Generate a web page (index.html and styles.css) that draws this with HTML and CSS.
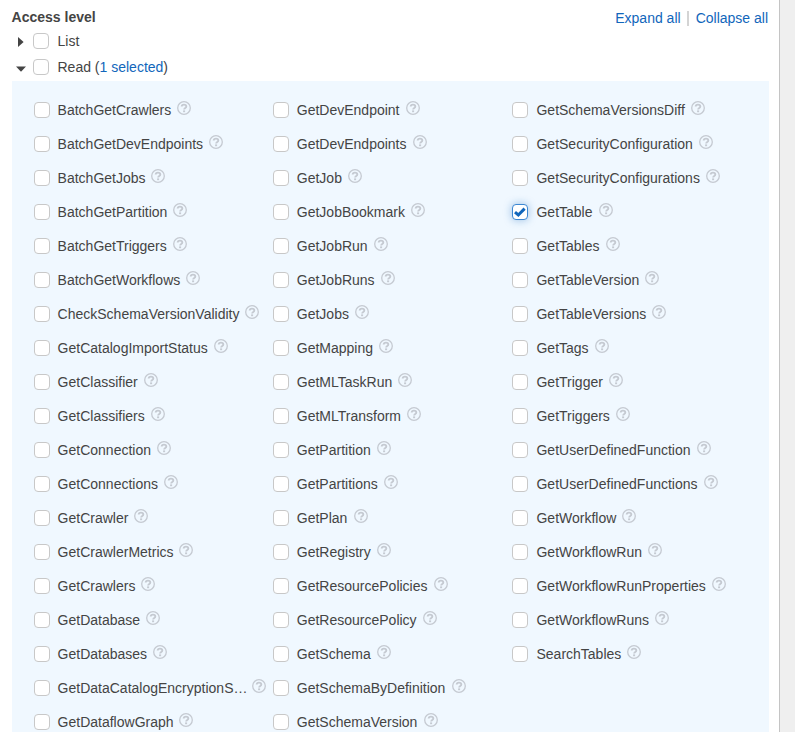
FILE: index.html
```html
<!DOCTYPE html>
<html lang="en">
<head>
<meta charset="utf-8">
<title>Access level</title>
<link rel="stylesheet" href="styles.css">
</head>
<body>
<svg class="defs" aria-hidden="true">
<symbol id="q" viewBox="0 0 14 14"><circle cx="7" cy="7" r="6.3" fill="none" stroke="currentColor" stroke-width="1.3"/><path d="M4.7 5.6C4.7 3 9.3 3 9.3 5.5C9.3 7 7.1 6.9 7.1 8.6" fill="none" stroke="currentColor" stroke-width="1.9"/><rect x="6.1" y="9.4" width="2" height="1.8" fill="currentColor"/></symbol>
</svg>
<div class="page">
<main class="content">
<header class="head">
<h1>Access level</h1>
<nav><a>Expand all</a><i class="sep"></i><a>Collapse all</a></nav>
</header>
<div class="group"><svg class="caret" viewBox="0 0 12 12"><path d="M3 1L8.6 6L3 11Z"/></svg><input type="checkbox"><span>List</span></div>
<div class="group"><svg class="caret" viewBox="0 0 12 12"><path d="M1 4.6H11L6 9.8Z"/></svg><input type="checkbox"><span>Read (<a>1 selected</a>)</span></div>
<section class="panel">
<div class="col">
<label><input type="checkbox"><span>BatchGetCrawlers</span><svg><use href="#q"/></svg></label>
<label><input type="checkbox"><span>BatchGetDevEndpoints</span><svg><use href="#q"/></svg></label>
<label><input type="checkbox"><span>BatchGetJobs</span><svg><use href="#q"/></svg></label>
<label><input type="checkbox"><span>BatchGetPartition</span><svg><use href="#q"/></svg></label>
<label><input type="checkbox"><span>BatchGetTriggers</span><svg><use href="#q"/></svg></label>
<label><input type="checkbox"><span>BatchGetWorkflows</span><svg><use href="#q"/></svg></label>
<label><input type="checkbox"><span>CheckSchemaVersionValidity</span><svg><use href="#q"/></svg></label>
<label><input type="checkbox"><span>GetCatalogImportStatus</span><svg><use href="#q"/></svg></label>
<label><input type="checkbox"><span>GetClassifier</span><svg><use href="#q"/></svg></label>
<label><input type="checkbox"><span>GetClassifiers</span><svg><use href="#q"/></svg></label>
<label><input type="checkbox"><span>GetConnection</span><svg><use href="#q"/></svg></label>
<label><input type="checkbox"><span>GetConnections</span><svg><use href="#q"/></svg></label>
<label><input type="checkbox"><span>GetCrawler</span><svg><use href="#q"/></svg></label>
<label><input type="checkbox"><span>GetCrawlerMetrics</span><svg><use href="#q"/></svg></label>
<label><input type="checkbox"><span>GetCrawlers</span><svg><use href="#q"/></svg></label>
<label><input type="checkbox"><span>GetDatabase</span><svg><use href="#q"/></svg></label>
<label><input type="checkbox"><span>GetDatabases</span><svg><use href="#q"/></svg></label>
<label><input type="checkbox"><span class="clipped">GetDataCatalogEncryptionS…</span><svg><use href="#q"/></svg></label>
<label><input type="checkbox"><span>GetDataflowGraph</span><svg><use href="#q"/></svg></label>
</div>
<div class="col">
<label><input type="checkbox"><span>GetDevEndpoint</span><svg><use href="#q"/></svg></label>
<label><input type="checkbox"><span>GetDevEndpoints</span><svg><use href="#q"/></svg></label>
<label><input type="checkbox"><span>GetJob</span><svg><use href="#q"/></svg></label>
<label><input type="checkbox"><span>GetJobBookmark</span><svg><use href="#q"/></svg></label>
<label><input type="checkbox"><span>GetJobRun</span><svg><use href="#q"/></svg></label>
<label><input type="checkbox"><span>GetJobRuns</span><svg><use href="#q"/></svg></label>
<label><input type="checkbox"><span>GetJobs</span><svg><use href="#q"/></svg></label>
<label><input type="checkbox"><span>GetMapping</span><svg><use href="#q"/></svg></label>
<label><input type="checkbox"><span>GetMLTaskRun</span><svg><use href="#q"/></svg></label>
<label><input type="checkbox"><span>GetMLTransform</span><svg><use href="#q"/></svg></label>
<label><input type="checkbox"><span>GetPartition</span><svg><use href="#q"/></svg></label>
<label><input type="checkbox"><span>GetPartitions</span><svg><use href="#q"/></svg></label>
<label><input type="checkbox"><span>GetPlan</span><svg><use href="#q"/></svg></label>
<label><input type="checkbox"><span>GetRegistry</span><svg><use href="#q"/></svg></label>
<label><input type="checkbox"><span>GetResourcePolicies</span><svg><use href="#q"/></svg></label>
<label><input type="checkbox"><span>GetResourcePolicy</span><svg><use href="#q"/></svg></label>
<label><input type="checkbox"><span>GetSchema</span><svg><use href="#q"/></svg></label>
<label><input type="checkbox"><span>GetSchemaByDefinition</span><svg><use href="#q"/></svg></label>
<label><input type="checkbox"><span>GetSchemaVersion</span><svg><use href="#q"/></svg></label>
</div>
<div class="col">
<label><input type="checkbox"><span>GetSchemaVersionsDiff</span><svg><use href="#q"/></svg></label>
<label><input type="checkbox"><span>GetSecurityConfiguration</span><svg><use href="#q"/></svg></label>
<label><input type="checkbox"><span>GetSecurityConfigurations</span><svg><use href="#q"/></svg></label>
<label><span class="checked"><input type="checkbox" checked><svg class="tick" viewBox="0 0 16 16"><path d="M3 8.2L6.3 11L12.6 4.6"/></svg></span><span>GetTable</span><svg><use href="#q"/></svg></label>
<label><input type="checkbox"><span>GetTables</span><svg><use href="#q"/></svg></label>
<label><input type="checkbox"><span>GetTableVersion</span><svg><use href="#q"/></svg></label>
<label><input type="checkbox"><span>GetTableVersions</span><svg><use href="#q"/></svg></label>
<label><input type="checkbox"><span>GetTags</span><svg><use href="#q"/></svg></label>
<label><input type="checkbox"><span>GetTrigger</span><svg><use href="#q"/></svg></label>
<label><input type="checkbox"><span>GetTriggers</span><svg><use href="#q"/></svg></label>
<label><input type="checkbox"><span>GetUserDefinedFunction</span><svg><use href="#q"/></svg></label>
<label><input type="checkbox"><span>GetUserDefinedFunctions</span><svg><use href="#q"/></svg></label>
<label><input type="checkbox"><span>GetWorkflow</span><svg><use href="#q"/></svg></label>
<label><input type="checkbox"><span>GetWorkflowRun</span><svg><use href="#q"/></svg></label>
<label><input type="checkbox"><span>GetWorkflowRunProperties</span><svg><use href="#q"/></svg></label>
<label><input type="checkbox"><span>GetWorkflowRuns</span><svg><use href="#q"/></svg></label>
<label><input type="checkbox"><span>SearchTables</span><svg><use href="#q"/></svg></label>
</div>
</section>
</main>
<aside class="gutter"></aside>
</div>
</body>
</html>
```
FILE: styles.css
```css
* { box-sizing: border-box; }
body {
  margin: 0;
  background: #fff;
  color: #444;
  font: 14px/20px "Liberation Sans", Arial, sans-serif;
  overflow: hidden;
}
.defs { display: none; }
.page { display: flex; height: 732px; overflow: hidden; }
.content { width: 779px; flex: none; padding: 7px 10px 0 12px; }
.gutter { width: 16px; background: #efefef; border-left: 1px solid #c4c4c4; }
a { color: #1166bb; }
.head { display: flex; justify-content: space-between; height: 21px; }
.head h1 { margin: 0 0 0 -0.4px; font-size: 14px; line-height: 20px; }
.head nav { display: flex; align-items: center; height: 22px; padding-right: 1px; }
.sep { width: 2px; height: 15px; margin: 0 6.6px 0 6.4px; background: #d4d4d4; }
.group { display: flex; align-items: center; height: 26px; }
.caret { width: 12px; height: 12px; margin: 2px 6px 0 3px; fill: #444; }
.group input { margin: 0 8.5px 0 0; }
input {
  appearance: none;
  flex: none;
  width: 16px;
  height: 16px;
  margin: 0;
  border: 1px solid #c8c8c8;
  border-radius: 4px;
  background: #fff;
}
.panel {
  display: flex;
  height: 700px;
  margin-top: 1px;
  padding: 12px 0 0 22px;
  background: #f0f8ff;
}
.col { width: 239.2px; flex: none; }
.col:last-child { width: 235px; }
label { display: flex; align-items: center; height: 34px; white-space: nowrap; }
label > span { margin-left: 7.6px; }
.col:last-child label > span { margin-left: 8.1px; }
label > svg { width: 14px; height: 14px; margin: 0 0 4px 5.85px; color: #c5cad2; }
.col + .col label > svg { margin-left: 6.15px; }
label > .clipped { margin-right: -1px; }
.col:last-child label > .checked { display: grid; margin: 0; }
.checked > * { grid-area: 1 / 1; }
.checked input { border-color: #3c87d2; box-shadow: 0 0 8px rgba(17, 102, 187, .4); }
.tick { width: 16px; height: 16px; z-index: 1; fill: none; stroke: #1166bb; stroke-width: 3; }
```
